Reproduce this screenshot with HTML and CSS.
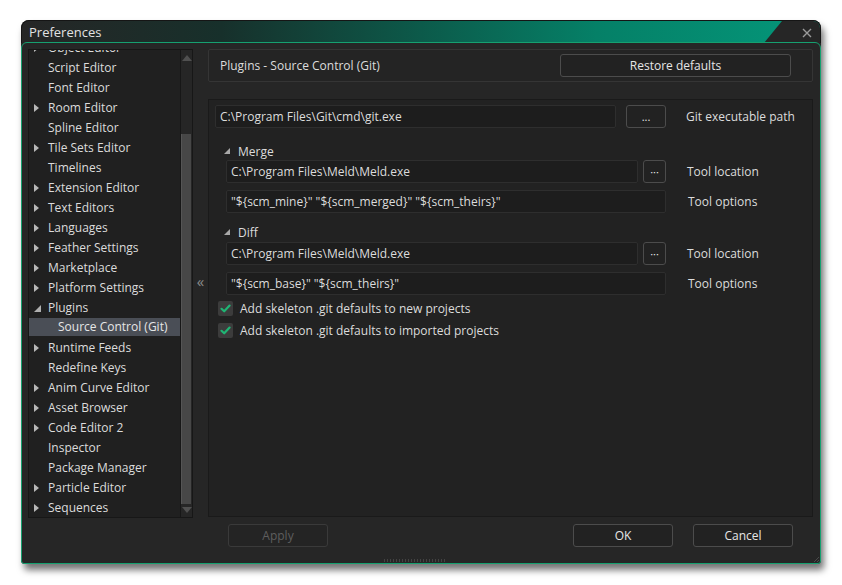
FILE: index.html
```html
<!DOCTYPE html>
<html>
<head>
<meta charset="utf-8">
<link rel="stylesheet" href="styles.css">
</head>
<body>
<div class="window">
  <div class="titlebar">
    <span class="title">Preferences</span>
    <div class="notch">
      <svg class="close" width="10" height="10" viewBox="0 0 10 10"><path d="M1 1L9 9M9 1L1 9" stroke="#9a9a9a" stroke-width="1.4" fill="none"/></svg>
    </div>
  </div>
  <div class="body">
    <div class="main">
      <div class="tree">
        <div class="tree-view">
          <ul class="list">
            <li class="item"><span class="tw"><i class="arr"></i></span>Object Editor</li>
            <li class="item"><span class="tw"></span>Script Editor</li>
            <li class="item"><span class="tw"></span>Font Editor</li>
            <li class="item"><span class="tw"><i class="arr"></i></span>Room Editor</li>
            <li class="item"><span class="tw"></span>Spline Editor</li>
            <li class="item"><span class="tw"><i class="arr"></i></span>Tile Sets Editor</li>
            <li class="item"><span class="tw"></span>Timelines</li>
            <li class="item"><span class="tw"><i class="arr"></i></span>Extension Editor</li>
            <li class="item"><span class="tw"><i class="arr"></i></span>Text Editors</li>
            <li class="item"><span class="tw"><i class="arr"></i></span>Languages</li>
            <li class="item"><span class="tw"><i class="arr"></i></span>Feather Settings</li>
            <li class="item"><span class="tw"><i class="arr"></i></span>Marketplace</li>
            <li class="item"><span class="tw"><i class="arr"></i></span>Platform Settings</li>
            <li class="item"><span class="tw"><i class="open"></i></span>Plugins</li>
            <li class="item child selected">Source Control (Git)</li>
            <li class="item"><span class="tw"><i class="arr"></i></span>Runtime Feeds</li>
            <li class="item"><span class="tw"></span>Redefine Keys</li>
            <li class="item"><span class="tw"><i class="arr"></i></span>Anim Curve Editor</li>
            <li class="item"><span class="tw"><i class="arr"></i></span>Asset Browser</li>
            <li class="item"><span class="tw"><i class="arr"></i></span>Code Editor 2</li>
            <li class="item"><span class="tw"></span>Inspector</li>
            <li class="item"><span class="tw"></span>Package Manager</li>
            <li class="item"><span class="tw"><i class="arr"></i></span>Particle Editor</li>
            <li class="item"><span class="tw"><i class="arr"></i></span>Sequences</li>
          </ul>
        </div>
        <div class="scrollbar">
          <i class="sb-up"></i>
          <div class="sb-track"><div class="sb-thumb"></div></div>
          <i class="sb-down"></i>
        </div>
      </div>
      <div class="collapse">«</div>
      <div class="right">
        <div class="header">
          <span class="header-title">Plugins - Source Control (Git)</span>
          <button class="btn restore">Restore defaults</button>
        </div>
        <div class="content">
          <div class="row git-row">
            <div class="input git-input">C:\Program Files\Git\cmd\git.exe</div>
            <button class="btn dots-wide">...</button>
            <span class="label git-label">Git executable path</span>
          </div>
          <div class="section-head"><i class="open small"></i>Merge</div>
          <div class="row tool-row">
            <div class="input loc-input">C:\Program Files\Meld\Meld.exe</div>
            <button class="btn dots-sq">···</button>
            <span class="label">Tool location</span>
          </div>
          <div class="row opt-row">
            <div class="input opt-input">"${scm_mine}" "${scm_merged}" "${scm_theirs}"</div>
            <span class="label">Tool options</span>
          </div>
          <div class="section-head diff"><i class="open small"></i>Diff</div>
          <div class="row tool-row">
            <div class="input loc-input">C:\Program Files\Meld\Meld.exe</div>
            <button class="btn dots-sq">···</button>
            <span class="label">Tool location</span>
          </div>
          <div class="row opt-row">
            <div class="input opt-input">"${scm_base}" "${scm_theirs}"</div>
            <span class="label">Tool options</span>
          </div>
          <div class="check-row first">
            <span class="checkbox"><svg width="15" height="15" viewBox="0 0 15 15"><path d="M3.5 7.8L6.2 10.3L11.6 4.6" stroke="#1fb574" stroke-width="2.2" fill="none" stroke-linecap="round" stroke-linejoin="round"/></svg></span>
            <span>Add skeleton .git defaults to new projects</span>
          </div>
          <div class="check-row">
            <span class="checkbox"><svg width="15" height="15" viewBox="0 0 15 15"><path d="M3.5 7.8L6.2 10.3L11.6 4.6" stroke="#1fb574" stroke-width="2.2" fill="none" stroke-linecap="round" stroke-linejoin="round"/></svg></span>
            <span>Add skeleton .git defaults to imported projects</span>
          </div>
        </div>
      </div>
    </div>
    <div class="footer">
      <button class="btn foot disabled">Apply</button>
      <span class="spacer"></span>
      <button class="btn foot">OK</button>
      <button class="btn foot">Cancel</button>
    </div>
    <div class="grip"></div>
    <div class="corner-grip"></div>
  </div>
</div>
</body>
</html>
```
FILE: styles.css
```css
* { box-sizing: border-box; }
html, body { margin: 0; padding: 0; background: #ffffff; }
body {
  width: 842px; height: 585px; overflow: hidden;
  font-family: "Open Sans", "Noto Sans", sans-serif;
  font-size: 12px; color: #dcdcdc;
  padding: 20px 0 0 21px;
}
.window {
  width: 800px; height: 544px;
  display: flex; flex-direction: column;
  border-radius: 8px 8px 4px 4px;
  box-shadow: 3px 6px 7px rgba(0,0,0,0.55);
  background: #262626;
}
.titlebar {
  height: 23px; flex: none;
  display: flex; align-items: stretch;
  border-radius: 8px 8px 0 0;
  background: linear-gradient(90deg, #262626 0%, #17302b 25%, #0c5a4a 50%, #058067 72%, #04977a 100%);
  border: 1px solid #151515; border-bottom: none;
  overflow: hidden;
}
.title { padding-left: 7px; line-height: 22px; font-size: 13px; color: #e2e2e2; }
.notch {
  margin-left: auto; width: 56px;
  background: #262626;
  clip-path: polygon(18px 0, 100% 0, 100% 100%, 0 100%);
  display: flex; align-items: center; justify-content: flex-end;
  padding-right: 8px;
}
.close { display: block; margin-top: 1px; }
.body {
  flex: 1; position: relative;
  border: 1px solid #16a070; border-radius: 6px 6px 3px 3px;
  background: #262626;
  margin-top: -1px;
  display: flex; flex-direction: column;
}
.main { display: flex; padding: 6px 7px 0 6px; height: 475px; }
.tree {
  width: 165px; height: 469px; flex: none;
  border: 1px solid #171717; background: #202020;
  display: flex;
}
.tree-view { flex: 1; overflow: hidden; }
.list { list-style: none; margin: -12px 0 0 0; padding: 0; }
.item { height: 20px; line-height: 20px; display: flex; align-items: center; white-space: nowrap; color: #dcdcdc; }
.tw { width: 19px; flex: none; height: 20px; display: flex; align-items: center; padding-left: 5px; }
.arr { display: block; width: 0; height: 0; border-top: 4.5px solid transparent; border-bottom: 4.5px solid transparent; border-left: 5px solid #b8b8b8; }
.open { display: block; width: 0; height: 0; border-left: 7px solid transparent; border-bottom: 7px solid #b0b0b0; }
.child { height: 18px; line-height: 18px; padding-left: 29px; margin-bottom: 2px; }
.selected { background: #4a4e56; color: #e6e6e6; }
.scrollbar {
  width: 12px; flex: none; border-left: 1px solid #171717;
  background: #262626; display: flex; flex-direction: column; align-items: center;
}
.sb-up { display: block; margin-top: 5px; width: 0; height: 0; border-left: 5px solid transparent; border-right: 5px solid transparent; border-bottom: 6px solid #505050; }
.sb-track { flex: 1; width: 100%; padding: 73px 1px 3px 0; }
.sb-thumb { height: 100%; background: #474747; border-left: 1px solid #555; }
.sb-down { display: block; margin-bottom: 4px; width: 0; height: 0; border-left: 5px solid transparent; border-right: 5px solid transparent; border-top: 6px solid #505050; }
.collapse { width: 15px; flex: none; text-align: center; color: #8a8a8a; font-size: 15px; padding-top: 222px; line-height: 20px; }
.right { flex: 1; display: flex; flex-direction: column; gap: 17px; }
.header {
  height: 33px; flex: none;
  border: 1px solid #353535; border-radius: 2px; background: #242424;
  display: flex; align-items: center; padding: 0 21px 0 11px;
}
.header-title { flex: 1; color: #dcdcdc; }
.btn {
  font-family: inherit; font-size: 12px; color: #e6e6e6;
  background: #222; border: 1px solid #4c4c4c; border-radius: 3px;
  height: 23px; padding: 0; cursor: default;
}
.restore { width: 231px; }
.content {
  height: 418px; flex: none;
  border: 1px solid #1a1a1a; background: #222222;
  padding: 5px 0 0 6px;
}
.row { display: flex; align-items: center; height: 23px; }
.input {
  height: 23px; line-height: 21px; padding: 0 4px;
  background: #1d1d1d; border: 1px solid #2e2e2e; border-radius: 2px;
  white-space: nowrap; overflow: hidden; color: #dcdcdc;
}
.git-input { width: 401px; }
.dots-wide { width: 40px; margin-left: 10px; font-size: 11px; }
.git-label { margin-left: 20px; }
.section-head { display: flex; align-items: center; height: 16px; margin-top: 15px; padding-left: 9px; color: #dcdcdc; }
.section-head.diff { margin-top: 11px; }
.open.small { border-left-width: 6px; border-bottom-width: 6px; margin-right: 8px; border-bottom-color: #a8a8a8; }
.tool-row { margin-top: 1px; padding-left: 11px; }
.diff + .tool-row { margin-top: 2px; }
.loc-input { width: 412px; }
.dots-sq { width: 23px; margin-left: 5px; font-size: 11px; line-height: 1; }
.tool-row .label { margin-left: 21px; }
.opt-row { margin-top: 7px; padding-left: 11px; }
.opt-input { width: 440px; }
.opt-row .label { margin-left: 22px; }
.check-row { display: flex; align-items: center; height: 15px; padding-left: 3px; margin-top: 7px; gap: 7px; }
.check-row.first { margin-top: 6px; }
.checkbox { width: 15px; height: 15px; background: #3c3c3c; border-radius: 2px; display: block; flex: none; }
.checkbox svg { display: block; }
.footer { display: flex; align-items: center; padding: 6px 27px 0 206px; }
.foot { width: 100px; }
.foot + .foot { margin-left: 20px; }
.disabled { color: #5e5e5e; border-color: #3a3a3a; background: #242424; }
.spacer { flex: 1; }
.grip {
  position: absolute; left: 361px; bottom: 1px; width: 62px; height: 3px;
  background-image: radial-gradient(circle, #4a4a4a 0.6px, transparent 0.9px);
  background-size: 3px 2px;
  opacity: 0.8;
}
.corner-grip {
  position: absolute; right: 1px; bottom: 1px; width: 6px; height: 6px;
  background: linear-gradient(135deg, transparent 55%, #4a4a4a 55%, #4a4a4a 65%, transparent 65%, transparent 78%, #4a4a4a 78%, #4a4a4a 88%, transparent 88%);
}
```
